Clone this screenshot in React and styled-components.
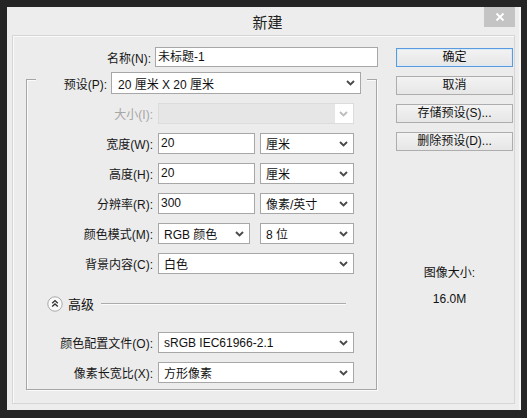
import React from 'react';
import styled, { createGlobalStyle } from 'styled-components';

const GlobalStyle = createGlobalStyle`
    html, body {
        margin: 0;
        padding: 0;
        background-color: #252525;
    }
    body {
        font-family: "Liberation Sans", "Noto Sans CJK SC", sans-serif;
        font-size: 12px;
        color: #111;
    }
`;

const Page = styled.div`
    width: 527px;
    height: 418px;
    box-sizing: border-box;
    padding: 7px 6px 8px 7px;
    background-color: #252525;
`;

const Window = styled.div`
    width: 514px;
    height: 403px;
    box-sizing: border-box;
    padding: 0 6px 6px 5px;
    background-color: #ededed;
    display: flex;
    flex-direction: column;
    box-shadow: inset -2px 0 0 #f6f6f6;
`;

const TitleBar = styled.div`
    height: 28px;
    flex-shrink: 0;
    display: grid;
    grid-template-columns: 1fr auto 1fr;
    margin-right: -6px;
`;

const Title = styled.div`
    grid-column: 2;
    align-self: center;
    font-family: "Noto Sans CJK SC", sans-serif;
    font-size: 15px;
    color: #222;
    padding-left: 2px;
`;

const CloseButton = styled.div`
    grid-column: 3;
    justify-self: end;
    align-self: start;
    width: 31px;
    height: 20px;
    margin-right: 6px;
    background-color: #c4c4c4;
    display: flex;
    align-items: center;
    justify-content: center;
`;

const Panel = styled.div`
    flex: 1;
    display: flex;
    border: 1px solid #d6d6d6;
    box-shadow: inset 1px 1px 0 #fafafa;
    background-color: #ececec;
`;

const FormColumn = styled.div`
    width: 365px;
    padding-left: 13px;
    padding-top: 11px;
    display: flex;
    flex-direction: column;
`;

const Row = styled.div`
    display: flex;
    align-items: center;
    height: ${({tall}) => tall ? '22px' : '21px'};
    margin-top: ${({top}) => top || 0}px;
`;

const NameRow = styled(Row)`
    height: 20px;
`;

const Label = styled.div`
    width: ${({w}) => w || 125}px;
    flex-shrink: 0;
    text-align: right;
    padding-right: ${({gap}) => gap || 5}px;
    box-sizing: content-box;
    white-space: nowrap;
    color: ${({disabled}) => disabled ? '#a6a6a6' : '#161616'};
`;

const TextBox = styled.div`
    width: ${({w}) => w}px;
    height: 100%;
    box-sizing: border-box;
    border: 1px solid #a7a7a7;
    background-color: #fff;
    padding-left: 2px;
    line-height: 19px;
    white-space: nowrap;
`;

const SelectBox = styled.div`
    width: ${({w}) => w}px;
    height: 100%;
    box-sizing: border-box;
    border: 1px solid ${({disabled}) => disabled ? '#dcdcdc' : '#a7a7a7'};
    background-color: #fff;
    display: flex;
    align-items: center;
    justify-content: space-between;
    padding-left: ${({pad}) => pad || 5}px;
    padding-right: 5px;
    white-space: nowrap;
    margin-left: ${({ml}) => ml || 0}px;
`;

const DisabledFill = styled.div`
    align-self: stretch;
    flex: 1;
    background-color: #e6e6e6;
    margin-left: -5px;
    margin-right: 4px;
`;

const Chevron = ({color = '#4a4a4a'}) => (
    <svg width="9" height="6" viewBox="0 0 9 6">
        <path d="M1 1 L4.5 4.5 L8 1" fill="none" stroke={color} strokeWidth="1.9" />
    </svg>
);

const GroupBox = styled.div`
    margin-top: 12px;
    width: 351px;
    height: 311px;
    box-sizing: border-box;
    border: 1px solid #a6a6a6;
    box-shadow: inset 1px 1px 0 #fbfbfb, 1px 1px 0 #fbfbfb;
    display: flex;
    flex-direction: column;
    padding-bottom: 6px;
`;

const LegendRow = styled(Row)`
    margin-top: -8px;
    margin-left: 9px;
    width: 331px;
    background-color: #ececec;
    padding-right: 6px;
    box-sizing: border-box;
`;

const AdvancedRow = styled.div`
    display: flex;
    align-items: center;
    height: 15px;
    margin-top: 22px;
    margin-left: 20px;
`;

const AdvancedText = styled.span`
    margin-left: 5px;
    font-family: "Noto Sans CJK SC", sans-serif;
    font-size: 13px;
`;

const AdvancedLine = styled.div`
    width: 245px;
    height: 1px;
    margin-left: 7px;
    background-color: #ababab;
    box-shadow: 0 1px 0 #fafafa;
`;

const ButtonColumn = styled.div`
    margin-left: auto;
    margin-right: 1px;
    width: 117px;
    padding-top: 12px;
    display: flex;
    flex-direction: column;
    gap: 9px;
`;

const Button = styled.div`
    height: 19px;
    box-sizing: border-box;
    border: 1px solid ${({primary}) => primary ? '#5a9be0' : '#adadad'};
    background: linear-gradient(#f3f3f3, #e6e6e6);
    box-shadow: ${({primary}) => primary ? 'inset 0 0 0 1px #d9e9f8' : 'none'};
    text-align: center;
    line-height: 17px;
    color: #111;
`;

const SizeInfo = styled.div`
    margin-top: 105px;
    padding-right: 10px;
    text-align: center;
    line-height: 16px;

    p {
        margin: 0;
    }
    p + p {
        margin-top: 10px;
    }
`;

const App = () => (
    <>
        <GlobalStyle />
        <Page>
            <Window>
                <TitleBar>
                    <Title>新建</Title>
                    <CloseButton>
                        <svg width="10" height="10" viewBox="0 0 10 10">
                            <path d="M1.5 1.5 L8.5 8.5 M8.5 1.5 L1.5 8.5" stroke="#fff" strokeWidth="1.8" />
                        </svg>
                    </CloseButton>
                </TitleBar>
                <Panel>
                    <FormColumn>
                        <NameRow>
                            <Label gap={4}>名称(N):</Label>
                            <TextBox w={223}>未标题-1</TextBox>
                        </NameRow>
                        <GroupBox>
                            <LegendRow tall>
                                <Label w={71} gap={4}>预设(P):</Label>
                                <SelectBox w={251} pad={6}>
                                    20 厘米 X 20 厘米
                                    <Chevron />
                                </SelectBox>
                            </LegendRow>
                            <Row top={9}>
                                <Label w={126} disabled>大小(I):</Label>
                                <SelectBox w={196} disabled>
                                    <DisabledFill />
                                    <Chevron color="#bdbdbd" />
                                </SelectBox>
                            </Row>
                            <Row top={9}>
                                <Label w={126}>宽度(W):</Label>
                                <TextBox w={97}>20</TextBox>
                                <SelectBox w={94} ml={5}>
                                    厘米
                                    <Chevron />
                                </SelectBox>
                            </Row>
                            <Row top={9}>
                                <Label w={126}>高度(H):</Label>
                                <TextBox w={97}>20</TextBox>
                                <SelectBox w={94} ml={5}>
                                    厘米
                                    <Chevron />
                                </SelectBox>
                            </Row>
                            <Row top={9}>
                                <Label w={126}>分辨率(R):</Label>
                                <TextBox w={97}>300</TextBox>
                                <SelectBox w={94} ml={5}>
                                    像素/英寸
                                    <Chevron />
                                </SelectBox>
                            </Row>
                            <Row top={9}>
                                <Label w={126}>颜色模式(M):</Label>
                                <SelectBox w={92}>
                                    RGB 颜色
                                    <Chevron />
                                </SelectBox>
                                <SelectBox w={94} ml={10}>
                                    8 位
                                    <Chevron />
                                </SelectBox>
                            </Row>
                            <Row top={9}>
                                <Label w={126}>背景内容(C):</Label>
                                <SelectBox w={196}>
                                    白色
                                    <Chevron />
                                </SelectBox>
                            </Row>
                            <AdvancedRow>
                                <svg width="16" height="16" viewBox="0 0 16 16">
                                    <circle cx="8" cy="8" r="7.2" fill="#fafafa" stroke="#a9a9a9" strokeWidth="1" />
                                    <path d="M5.2 7.2 L8 4.6 L10.8 7.2 M5.2 10.6 L8 8 L10.8 10.6" fill="none" stroke="#333" strokeWidth="1.4" />
                                </svg>
                                <AdvancedText>高级</AdvancedText>
                                <AdvancedLine />
                            </AdvancedRow>
                            <Row top={21}>
                                <Label w={126}>颜色配置文件(O):</Label>
                                <SelectBox w={196}>
                                    sRGB IEC61966-2.1
                                    <Chevron />
                                </SelectBox>
                            </Row>
                            <Row top={9}>
                                <Label w={126}>像素长宽比(X):</Label>
                                <SelectBox w={196}>
                                    方形像素
                                    <Chevron />
                                </SelectBox>
                            </Row>
                        </GroupBox>
                    </FormColumn>
                    <ButtonColumn>
                        <Button primary>确定</Button>
                        <Button>取消</Button>
                        <Button>存储预设(S)...</Button>
                        <Button>删除预设(D)...</Button>
                        <SizeInfo>
                            <p>图像大小:</p>
                            <p>16.0M</p>
                        </SizeInfo>
                    </ButtonColumn>
                </Panel>
            </Window>
        </Page>
    </>
);

export default App;
